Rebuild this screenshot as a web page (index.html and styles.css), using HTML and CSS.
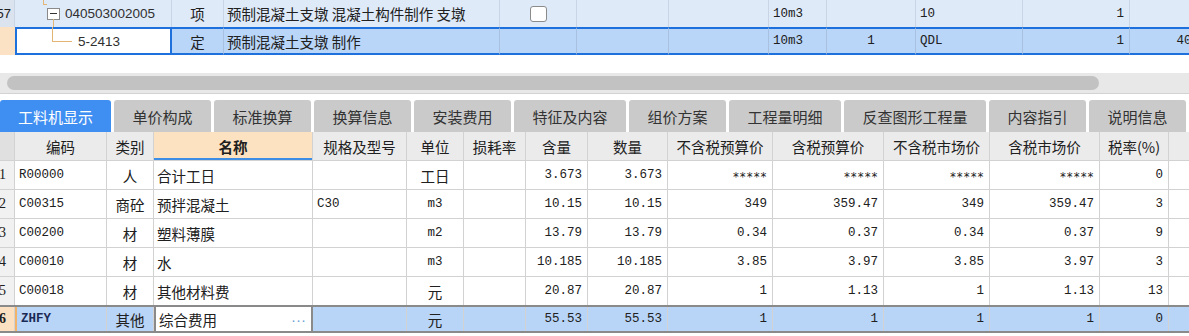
FILE: index.html
```html
<!DOCTYPE html>
<html lang="zh">
<head>
<meta charset="utf-8">
<link rel="stylesheet" href="styles.css">
</head>
<body>
<div class="top">
  <div class="trow r1">
    <div class="c rn">57</div>
    <div class="c code tree">
      <span class="ln v0"></span><span class="ln h0"></span>
      <span class="tb"></span><span class="ln v1"></span>
      <span class="codetxt t1">040503002005</span>
    </div>
    <div class="c ctr">项</div>
    <div class="c nm">预制混凝土支墩 混凝土构件制作 支墩</div>
    <div class="c ctr"><span class="chk"></span></div>
    <div class="c"></div>
    <div class="c"></div>
    <div class="c mono pl">10m3</div>
    <div class="c mono ctr"></div>
    <div class="c mono pl">10</div>
    <div class="c mono n">1</div>
    <div class="c mono n"></div>
  </div>
  <div class="trow r2">
    <div class="c rn"></div>
    <div class="c code tree">
      <span class="ln v2"></span><span class="ln h2"></span>
      <span class="codetxt t2">5-2413</span>
    </div>
    <div class="c ctr">定</div>
    <div class="c nm">预制混凝土支墩 制作</div>
    <div class="c"></div>
    <div class="c"></div>
    <div class="c"></div>
    <div class="c mono pl">10m3</div>
    <div class="c mono ctr">1</div>
    <div class="c mono pl">QDL</div>
    <div class="c mono n">1</div>
    <div class="c mono n">4048.88</div>
  </div>
</div>

<div class="hscroll"><div class="thumb"></div></div>

<div class="tabs">
  <div class="tab active w111">工料机显示</div>
  <div class="tab w97">单价构成</div>
  <div class="tab w97">标准换算</div>
  <div class="tab w97">换算信息</div>
  <div class="tab w97">安装费用</div>
  <div class="tab w112">特征及内容</div>
  <div class="tab w97">组价方案</div>
  <div class="tab w112">工程量明细</div>
  <div class="tab w142">反查图形工程量</div>
  <div class="tab w97">内容指引</div>
  <div class="tab w97">说明信息</div>
</div>

<div class="grid">
  <div class="grow head">
    <div class="c rn"></div>
    <div class="c ctr">编码</div>
    <div class="c ctr">类别</div>
    <div class="c ctr name-h">名称</div>
    <div class="c ctr">规格及型号</div>
    <div class="c ctr">单位</div>
    <div class="c ctr">损耗率</div>
    <div class="c ctr">含量</div>
    <div class="c ctr">数量</div>
    <div class="c ctr">不含税预算价</div>
    <div class="c ctr">含税预算价</div>
    <div class="c ctr">不含税市场价</div>
    <div class="c ctr">含税市场价</div>
    <div class="c ctr">税率(%)</div>
    <div class="c"></div>
  </div>
  <div class="grow">
    <div class="c rn">1</div>
    <div class="c mono pl">R00000</div>
    <div class="c ctr">人</div>
    <div class="c nm">合计工日</div>
    <div class="c mono pl"></div>
    <div class="c ctr">工日</div>
    <div class="c"></div>
    <div class="c mono n">3.673</div>
    <div class="c mono n">3.673</div>
    <div class="c mono n star">*****</div>
    <div class="c mono n star">*****</div>
    <div class="c mono n star">*****</div>
    <div class="c mono n star">*****</div>
    <div class="c mono n">0</div>
    <div class="c"></div>
  </div>
  <div class="grow">
    <div class="c rn">2</div>
    <div class="c mono pl">C00315</div>
    <div class="c ctr">商砼</div>
    <div class="c nm">预拌混凝土</div>
    <div class="c mono pl">C30</div>
    <div class="c mono ctr">m3</div>
    <div class="c"></div>
    <div class="c mono n">10.15</div>
    <div class="c mono n">10.15</div>
    <div class="c mono n">349</div>
    <div class="c mono n">359.47</div>
    <div class="c mono n">349</div>
    <div class="c mono n">359.47</div>
    <div class="c mono n">3</div>
    <div class="c"></div>
  </div>
  <div class="grow">
    <div class="c rn">3</div>
    <div class="c mono pl">C00200</div>
    <div class="c ctr">材</div>
    <div class="c nm">塑料薄膜</div>
    <div class="c mono pl"></div>
    <div class="c mono ctr">m2</div>
    <div class="c"></div>
    <div class="c mono n">13.79</div>
    <div class="c mono n">13.79</div>
    <div class="c mono n">0.34</div>
    <div class="c mono n">0.37</div>
    <div class="c mono n">0.34</div>
    <div class="c mono n">0.37</div>
    <div class="c mono n">9</div>
    <div class="c"></div>
  </div>
  <div class="grow">
    <div class="c rn">4</div>
    <div class="c mono pl">C00010</div>
    <div class="c ctr">材</div>
    <div class="c nm">水</div>
    <div class="c mono pl"></div>
    <div class="c mono ctr">m3</div>
    <div class="c"></div>
    <div class="c mono n">10.185</div>
    <div class="c mono n">10.185</div>
    <div class="c mono n">3.85</div>
    <div class="c mono n">3.97</div>
    <div class="c mono n">3.85</div>
    <div class="c mono n">3.97</div>
    <div class="c mono n">3</div>
    <div class="c"></div>
  </div>
  <div class="grow last5">
    <div class="c rn">5</div>
    <div class="c mono pl">C00018</div>
    <div class="c ctr">材</div>
    <div class="c nm">其他材料费</div>
    <div class="c mono pl"></div>
    <div class="c ctr">元</div>
    <div class="c"></div>
    <div class="c mono n">20.87</div>
    <div class="c mono n">20.87</div>
    <div class="c mono n">1</div>
    <div class="c mono n">1.13</div>
    <div class="c mono n">1</div>
    <div class="c mono n">1.13</div>
    <div class="c mono n">13</div>
    <div class="c"></div>
  </div>
  <div class="grow sel">
    <div class="c rn">6</div>
    <div class="c mono pl code6">ZHFY</div>
    <div class="c ctr">其他</div>
    <div class="c nm edit"><span>综合费用</span><span class="dots">···</span></div>
    <div class="c"></div>
    <div class="c ctr">元</div>
    <div class="c"></div>
    <div class="c mono n">55.53</div>
    <div class="c mono n">55.53</div>
    <div class="c mono n">1</div>
    <div class="c mono n">1</div>
    <div class="c mono n">1</div>
    <div class="c mono n">1</div>
    <div class="c mono n">0</div>
    <div class="c"></div>
  </div>
</div>
</body>
</html>
```

FILE: styles.css
```css
* { box-sizing: border-box; }

body {
  margin: 0;
  width: 1189px;
  height: 336px;
  overflow: hidden;
  background: #ffffff;
  font-family: "Noto Sans CJK SC", "Noto Sans", sans-serif;
  color: #202020;
}

.c {
  display: flex;
  align-items: center;
  white-space: nowrap;
  overflow: hidden;
  font-size: 14.5px;
  min-width: 0;
}

.ctr { justify-content: center; }
.pl { padding-left: 4px; }
.nm { padding-left: 3px; }
.n { justify-content: flex-end; padding-right: 5px; }
.mono { font-family: "Liberation Mono", monospace; font-size: 12.5px; }
.star { font-family: "DejaVu Sans Mono", monospace; font-size: 11.5px; padding-top: 3px; }

/* ---------- top (upper grid) ---------- */
.top { margin-left: -20px; }

.trow {
  display: grid;
  grid-template-columns: 35px 157px 52px 276px 77px 92px 100px 58px 89px 107px 107px 105px;
}

.r1 { height: 27px; background: #dfeaf9; }
.r1 .c { border-right: 1px solid #c9d5e4; }
.r1 .rn {
  background: #dbe3ee;
  justify-content: flex-end;
  padding-right: 3px;
  font-family: "Liberation Sans", sans-serif;
  font-size: 13px;
}

.r2 { height: 28px; background: #b9d5f7; }
.r2 .c {
  border-top: 2px solid #1e70dc;
  border-bottom: 2px solid #1e70dc;
  border-right: 1px solid #a8c1e0;
}
.r2 .rn { border: none; background: #fce2c5; }
.r2 .code {
  background: #ffffff;
  border-left: 2px solid #1e70dc;
  border-right: 2px solid #1e70dc;
}

.tree { position: relative; overflow: visible; }
.codetxt {
  font-family: "Liberation Sans", sans-serif;
  font-size: 13.5px;
  color: #303030;
}
.t1 { padding-left: 50px; }
.t2 { padding-left: 61px; }

.ln { position: absolute; background: #e3b676; }
.v0 { left: 28px; top: 0; width: 1px; height: 5px; }
.h0 { left: 28px; top: 4px; width: 4px; height: 1px; }
.v1 { left: 38px; top: 19px; width: 1px; height: 8px; }
.v2 { left: 35px; top: -2px; width: 1px; height: 14px; }
.h2 { left: 35px; top: 12px; width: 20px; height: 1px; }

.tb {
  position: absolute;
  left: 32px;
  top: 8px;
  width: 13px;
  height: 12px;
  border: 1px solid #8a8a8a;
  background: #ffffff;
}
.tb::after {
  content: "";
  position: absolute;
  left: 2px;
  top: 4px;
  width: 7px;
  height: 1px;
  background: #333333;
}

.chk {
  width: 17px;
  height: 16px;
  border: 1px solid #8b8b8b;
  border-radius: 3px;
  background: #ffffff;
}

/* ---------- horizontal scroll bar ---------- */
.hscroll {
  margin-top: 18px;
  height: 21px;
  background: #e8e8e8;
  border-bottom: 1px solid #d2d2d2;
  padding: 3px 0 3px 7px;
}
.thumb {
  width: 1092px;
  height: 14px;
  border-radius: 7px;
  background: #c2c2c2;
}

/* ---------- tabs ---------- */
.tabs {
  margin-top: 6px;
  display: flex;
  gap: 3px;
  height: 32px;
}
.tab {
  height: 32px;
  flex: none;
  display: flex;
  align-items: center;
  justify-content: center;
  background: #cacaca;
  color: #333333;
  font-size: 15px;
  border-radius: 3px 3px 0 0;
}
.tab.active { background: #3f8ff2; color: #ffffff; }
.w97 { width: 97px; }
.w111 { width: 111px; }
.w112 { width: 112px; }
.w142 { width: 142px; }

/* ---------- lower grid ---------- */
.grid { margin-left: -20px; }

.grow {
  display: grid;
  grid-template-columns: 35px 92px 47px 159px 94px 57px 62px 62px 80px 105px 111px 106px 110px 69px 60px;
  height: 29px;
  border-bottom: 1px solid #d2d2d2;
}
.grow .c { border-right: 1px solid #d2d2d2; }
.grow .rn {
  background: #f1f1f1;
  justify-content: flex-end;
  padding-right: 8px;
  font-family: "Liberation Serif", serif;
  font-size: 14px;
}

.head { background: #ebebeb; }
.head .rn { background: #e0e0e0; }
.name-h {
  background: #fde2c1;
  font-weight: bold;
  box-shadow: inset 0 -2px 0 #3d8de4;
}

.last5 { height: 28px; border-bottom: none; }

.sel {
  height: 28px;
  background: #b8d4f7;
  border-top: 2px solid #8a8a8a;
  border-bottom: 2px solid #8a8a8a;
}
.sel .rn { background: #fbe0c2; font-weight: bold; }
.sel .code6 {
  border-left: 2px solid #f1b26a;
  font-weight: bold;
  color: #1b2a55;
}
.sel .edit {
  background: #ffffff;
  border-left: 2px solid #8a8a8a;
  border-right: 2px solid #8a8a8a;
  justify-content: space-between;
  padding-right: 5px;
}
.dots { color: #6d9fd6; font-size: 15px; font-family: "Liberation Sans", sans-serif; letter-spacing: 0; }
```
